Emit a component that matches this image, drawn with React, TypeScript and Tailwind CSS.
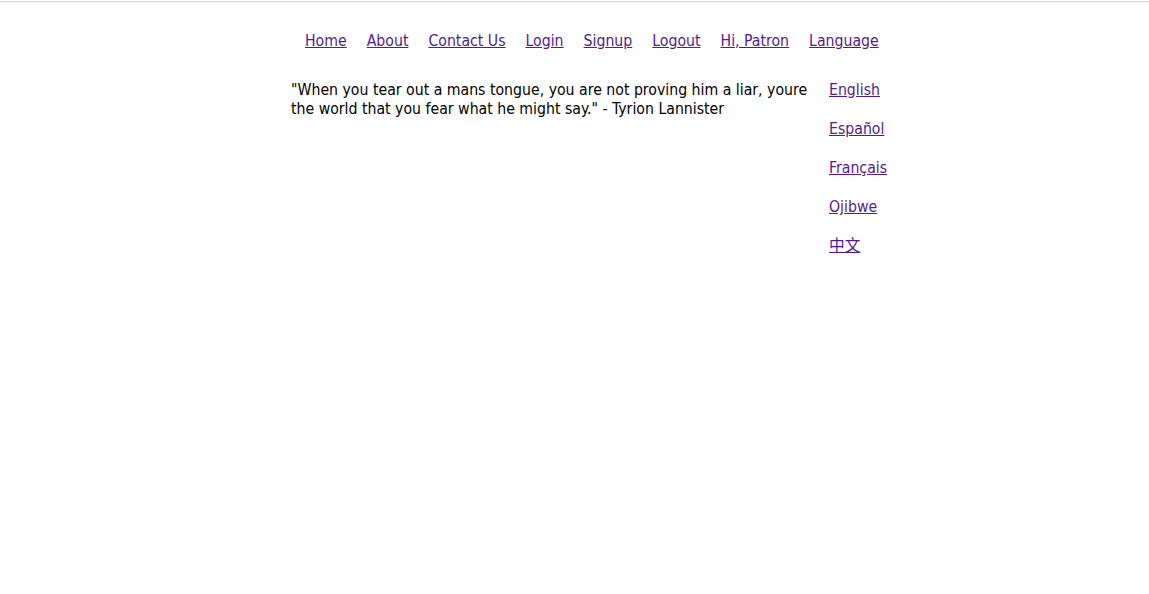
const navLinks = ["Home", "About", "Contact Us", "Login", "Signup", "Logout", "Hi, Patron", "Language"];
const languages = ["English", "Español", "Français", "Ojibwe", "中文"];

export default function App() {
  return (
    <div className="min-h-[594px] bg-white text-black text-[15.7px] leading-[19px] font-['DejaVu_Sans_Condensed','Noto_Sans_CJK_SC',sans-serif]">
      <div className="h-px mt-px bg-[#d6d6d6]" />
      <nav className="flex gap-5 pl-[305px] pt-[29px]">
        {navLinks.map((l) => (
          <a key={l} href="#" className="text-[#551a8b] underline">
            {l}
          </a>
        ))}
      </nav>
      <div className="flex pl-[291px] pt-[30px]">
        <p className="w-[522px]">
          "When you tear out a mans tongue, you are not proving him a liar, youre the world that you fear what he might say." - Tyrion Lannister
        </p>
        <ul className="ml-[16px] flex flex-col gap-[20px]">
          {languages.map((l) => (
            <li key={l}>
              <a href="#" className="text-[#551a8b] underline">
                {l}
              </a>
            </li>
          ))}
        </ul>
      </div>
    </div>
  );
}
